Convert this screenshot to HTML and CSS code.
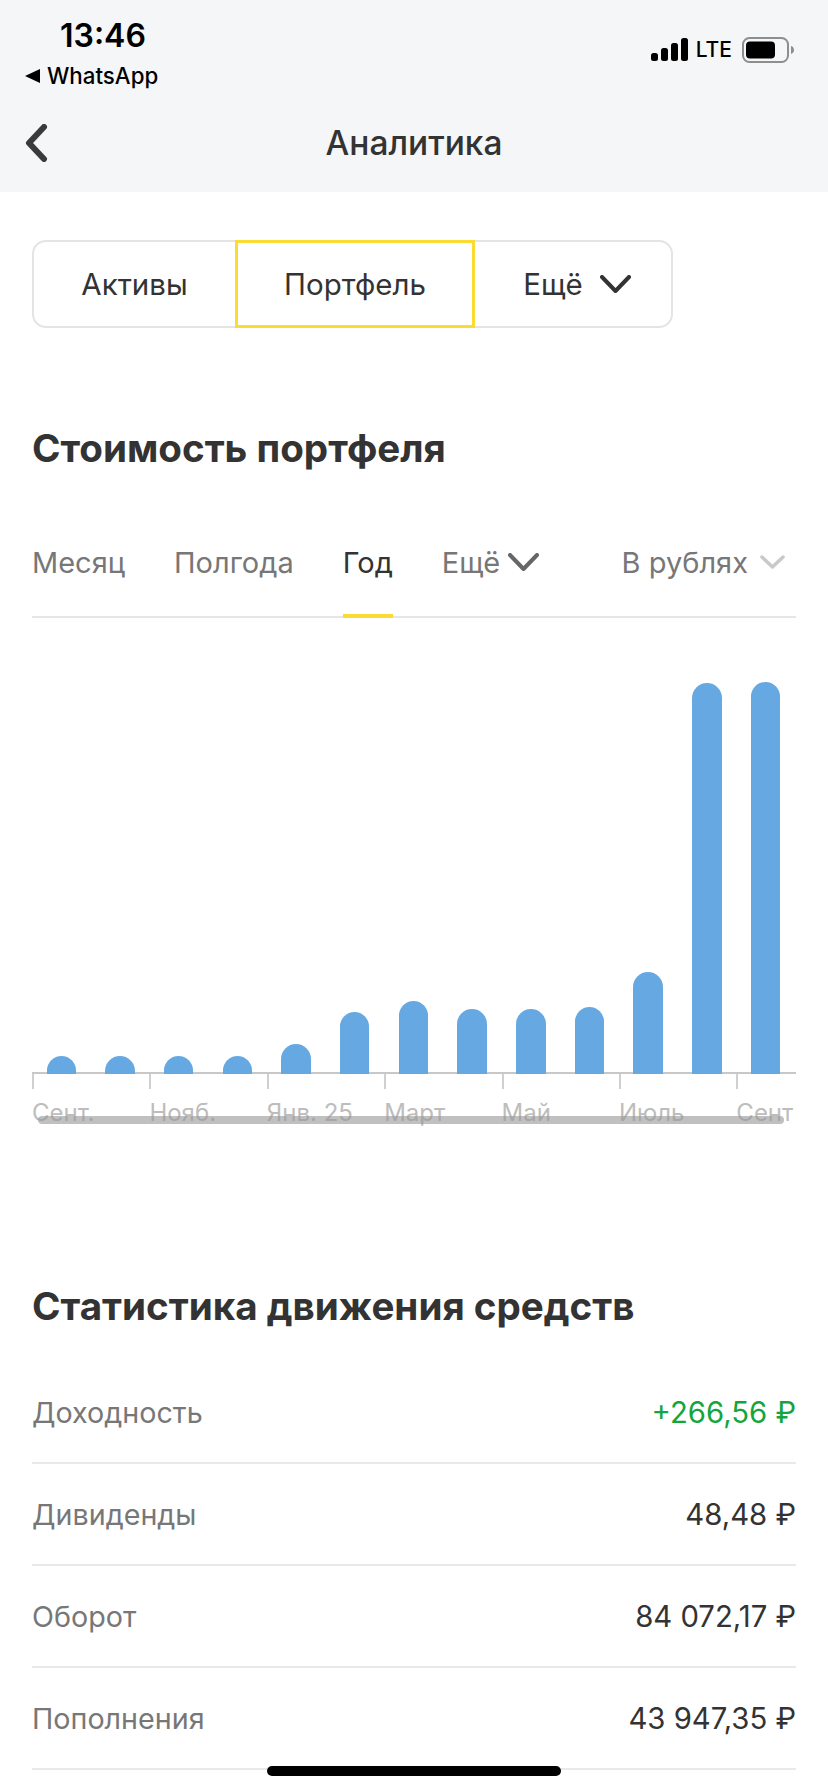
FILE: index.html
```html
<!DOCTYPE html>
<html>

	<head>
		<meta charset="UTF-8">
		<title>Аналитика</title>
		<link rel="stylesheet" href="styles.css">
	</head>

	<body>
		<div id="main">
			<div class="top">
				<div class="statusbar">
					<div class="statusleft">
						<div class="time">13:46</div>
						<div class="backapp"><span class="backarrow"></span>WhatsApp</div>
					</div>
					<div class="statusright">
						<svg class="signal" width="37" height="23" viewBox="0 0 37 23">
							<rect x="0" y="15" width="7" height="8" rx="2.5"></rect>
							<rect x="10" y="10" width="7" height="13" rx="2.5"></rect>
							<rect x="20" y="5" width="7" height="18" rx="2.5"></rect>
							<rect x="30" y="0" width="7" height="23" rx="2.5"></rect>
						</svg>
						<span class="lte">LTE</span>
						<svg class="battery" width="52" height="26" viewBox="0 0 52 26">
							<rect x="1" y="1" width="45" height="24" rx="6.5" fill="none" stroke="#8e8e8e" stroke-width="2"></rect>
							<rect x="4" y="4.5" width="29" height="17" rx="4" fill="#000"></rect>
							<path d="M49 9c2 .6 3 2.2 3 4s-1 3.400-3 4z" fill="#8e8e8e"></path>
						</svg>
					</div>
				</div>
				<div class="navbar">
					<svg class="navback" width="24" height="38" viewBox="0 0 24 38">
						<path d="M20 3 5 19l15 16" fill="none" stroke="#3a3a3a" stroke-width="6" stroke-linecap="round" stroke-linejoin="round"></path>
					</svg>
					<div class="navtitle">Аналитика</div>
				</div>
			</div>

			<div class="content">
				<div class="segment">
					<div class="segitem seg1">Активы</div>
					<div class="segitem seg2">Портфель</div>
					<div class="segitem seg3">Ещё
						<svg width="31" height="18" viewBox="0 0 31 18">
							<path d="M2 2 15.500 16 29 2" fill="none" stroke="#333" stroke-width="4" stroke-linecap="round" stroke-linejoin="round"></path>
						</svg>
					</div>
				</div>

				<h2 class="title title1">Стоимость портфеля</h2>

				<div class="tabs">
					<div class="tab">Месяц</div>
					<div class="tab">Полгода</div>
					<div class="tab active">Год</div>
					<div class="tab tabmore">Ещё
						<svg width="31" height="18" viewBox="0 0 31 18">
							<path d="M2 2 15.500 16 29 2" fill="none" stroke="#666" stroke-width="4" stroke-linecap="round" stroke-linejoin="round"></path>
						</svg>
					</div>
					<div class="tab tabcur">В рублях
						<svg width="25" height="14" viewBox="0 0 25 14">
							<path d="M2 2 12.500 12 23 2" fill="none" stroke="#c9c9c9" stroke-width="3.500" stroke-linecap="round" stroke-linejoin="round"></path>
						</svg>
					</div>
				</div>

				<div class="chart">
					<div class="bars">
						<div class="bar" style="height: 18px"></div>
						<div class="bar" style="height: 18px"></div>
						<div class="bar" style="height: 18px"></div>
						<div class="bar" style="height: 18px"></div>
						<div class="bar" style="height: 30px"></div>
						<div class="bar" style="height: 62px"></div>
						<div class="bar" style="height: 73px"></div>
						<div class="bar" style="height: 65px"></div>
						<div class="bar" style="height: 65px"></div>
						<div class="bar" style="height: 67px"></div>
						<div class="bar" style="height: 102px"></div>
						<div class="bar" style="height: 391px"></div>
						<div class="bar" style="height: 392px"></div>
					</div>
					<div class="axis">
						<div class="mark">Сент.</div>
						<div class="mark">Нояб.</div>
						<div class="mark">Янв. 25</div>
						<div class="mark">Март</div>
						<div class="mark">Май</div>
						<div class="mark">Июль</div>
						<div class="mark">Сент</div>
					</div>
					<div class="scrollbar"></div>
				</div>

				<h2 class="title title2">Статистика движения средств</h2>

				<div class="stats">
					<div class="row"><span class="rowname">Доходность</span><span class="rowval green">+266,56 ₽</span></div>
					<div class="row"><span class="rowname">Дивиденды</span><span class="rowval">48,48 ₽</span></div>
					<div class="row"><span class="rowname">Оборот</span><span class="rowval">84 072,17 ₽</span></div>
					<div class="row"><span class="rowname">Пополнения</span><span class="rowval">43 947,35 ₽</span></div>
				</div>
			</div>

			<div class="homebar"></div>
		</div>
	</body>

</html>
```

FILE: styles.css
```css
* {
	box-sizing: border-box;
}

body {
	margin: 0;
	background-color: #fff;
	font-family: "Inter", "Roboto", "Noto Sans", sans-serif;
	color: #333;
}

#main {
	position: relative;
	height: 1792px;
	width: 828px;
	overflow: hidden;
}

.top {
	height: 192px;
	background-color: #f5f6f8;
}

.statusbar {
	display: flex;
	justify-content: space-between;
	height: 104px;
	padding: 20px 34px 0 25px;
}

.time {
	margin-left: 35px;
	font-size: 32px;
	line-height: 32px;
	font-weight: 600;
	color: #000;
}

.backapp {
	display: flex;
	align-items: center;
	margin-top: 10px;
	font-size: 22.300px;
	line-height: 28px;
	font-weight: 500;
	color: #000;
}

.backarrow {
	width: 0;
	height: 0;
	margin-right: 7px;
	border-style: solid;
	border-width: 7px 15px 7px 0;
	border-color: transparent #000 transparent transparent;
}

.statusright {
	display: flex;
	align-items: flex-start;
	padding-top: 17px;
}

.signal {
	margin-top: 1px;
	fill: #000;
}

.lte {
	margin-left: 8px;
	font-size: 21px;
	line-height: 26px;
	font-weight: 500;
	color: #000;
}

.battery {
	margin-left: 10px;
}

.navbar {
	position: relative;
	display: flex;
	justify-content: center;
	align-items: center;
	height: 78px;
}

.navback {
	position: absolute;
	left: 24px;
	top: 20px;
}

.navtitle {
	font-size: 33.500px;
	font-weight: 500;
	color: #333;
}

.content {
	padding: 48px 32px 0;
}

.segment {
	display: flex;
	width: 641px;
	height: 88px;
	border: 2px solid #e4e4e4;
	border-radius: 14px;
	font-size: 29.500px;
}

.segitem {
	display: flex;
	align-items: center;
	justify-content: center;
}

.seg1 {
	width: 201px;
}

.seg2 {
	width: 240px;
	margin: -2px 0;
	border: 3px solid #fbdc32;
}

.seg3 {
	flex: 1;
	gap: 17px;
	padding-left: 8px;
}

.title {
	margin: 0;
	font-size: 38.600px;
	line-height: 46px;
	font-weight: 700;
	color: #333;
}

.title1 {
	margin-top: 97px;
}

.tabs {
	display: flex;
	height: 102px;
	margin-top: 45px;
	border-bottom: 2px solid #e6e6e6;
	font-size: 29px;
	color: #777;
}

.tab {
	display: flex;
	align-items: center;
	height: 100px;
	margin-right: 49px;
	padding-bottom: 8px;
}

.tab.active {
	height: 102px;
	border-bottom: 4px solid #fbdc32;
	padding-bottom: 6px;
	color: #333;
}

.tabmore {
	gap: 8px;
	margin-right: 0;
}

.tabcur {
	gap: 12px;
	margin-left: auto;
	margin-right: 11px;
}

.chart {
	position: relative;
	height: 560px;
}

.bars {
	position: relative;
	display: flex;
	align-items: flex-end;
	gap: 29.200px;
	height: 456px;
	margin-bottom: -2px;
	padding-left: 14.500px;
}

.bar {
	flex: none;
	width: 29.500px;
	background-color: #65a8e2;
	border-radius: 15px 15px 0 0;
}

.axis {
	display: grid;
	grid-template-columns: repeat(7, 117.400px);
	overflow: hidden;
	border-top: 2px solid #c8c8c8;
	font-size: 24px;
	color: #bdbdbd;
}

.mark {
	position: relative;
	height: 60px;
	padding-top: 24px;
	white-space: nowrap;
}

.mark::before {
	content: "";
	position: absolute;
	left: 0;
	top: 0;
	height: 15px;
	border-left: 2px solid #d0d0d0;
}

.scrollbar {
	position: absolute;
	left: 6px;
	right: 12px;
	top: 498px;
	height: 8px;
	border-radius: 4px;
	background-color: rgba(150, 150, 150, 0.6);
}

.title2 {
	margin-top: 105px;
}

.stats {
	margin-top: 33px;
}

.row {
	display: flex;
	justify-content: space-between;
	align-items: center;
	height: 102px;
	border-bottom: 2px solid #e9e9e9;
	font-size: 28.700px;
}

.rowname {
	color: #777;
}

.rowval {
	font-size: 29.300px;
}

.green {
	color: #12a63c;
}

.homebar {
	position: absolute;
	left: 267px;
	top: 1766px;
	width: 294px;
	height: 10px;
	border-radius: 5px;
	background-color: #000;
}
```
